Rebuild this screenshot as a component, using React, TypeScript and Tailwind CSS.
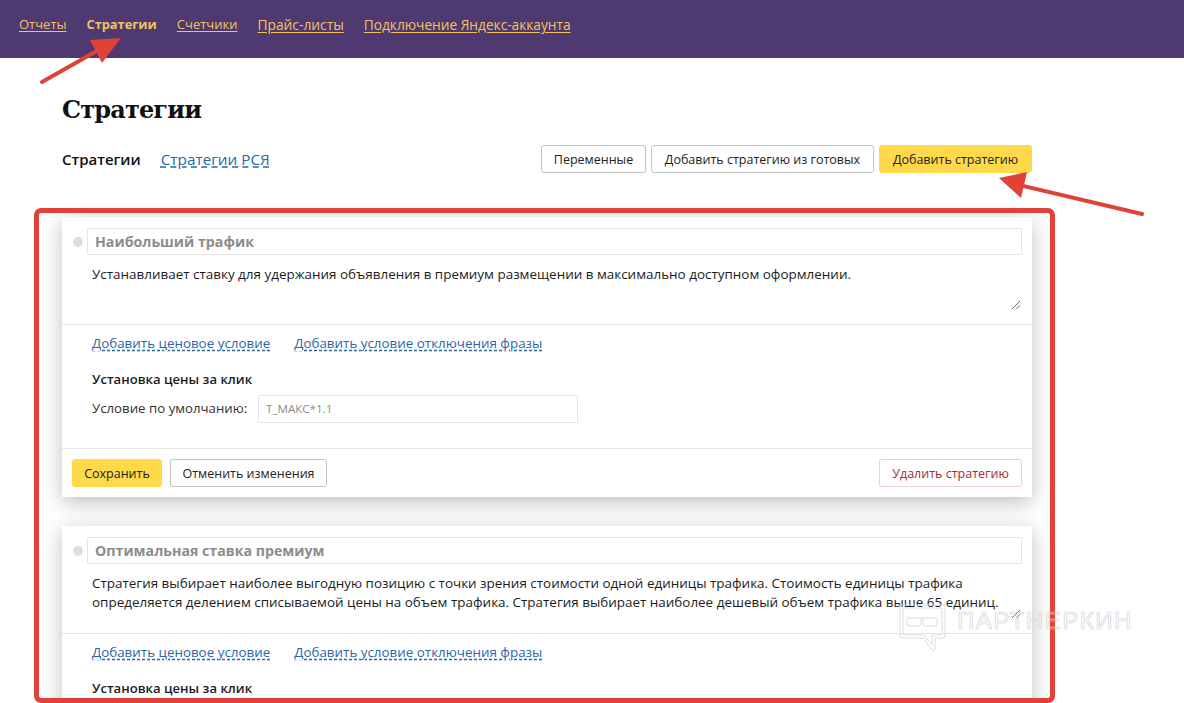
const sans = 'font-["Open_Sans","Noto_Sans",sans-serif]';

const navLinks = [
  { label: 'Отчеты', cls: 'underline text-[13px]' },
  { label: 'Стратегии', cls: 'text-[12.8px] font-bold' },
  { label: 'Счетчики', cls: 'underline text-[13px]' },
  { label: 'Прайс-листы', cls: 'underline text-[13.8px]' },
  { label: 'Подключение Яндекс-аккаунта', cls: 'underline text-[13.7px]' },
];

function Btn({ children, kind = 'plain', className = '' }: { children: string; kind?: 'plain' | 'yellow' | 'danger'; className?: string }) {
  const look =
    kind === 'yellow'
      ? 'bg-[#ffd94a] text-[#222] border-[#ffd94a]'
      : kind === 'danger'
      ? 'bg-white text-[#a32a38] border-[#ebcfd1]'
      : 'bg-white text-[#222] border-[#c4c4c4]';
  return (
    <button className={`h-[28px] pt-[2px] rounded-[3px] border text-[12.5px] leading-none whitespace-nowrap ${look} ${className}`}>
      {children}
    </button>
  );
}

function StrategyCard({ title, text }: { title: string; text: string[] }) {
  return (
    <div className="w-[970px] bg-white shadow-[0_5px_20px_rgba(0,0,0,0.26)]">
      <div className="flex items-center pt-[11px] pl-[11px] pr-[10px]">
        <span className="w-[10px] h-[10px] rounded-full bg-[#dedede] mr-[4px]" />
        <div className="flex-1 h-[27px] flex items-center pl-[7px] border border-[#e4e4e4] rounded-[2px] text-[14.2px] font-bold text-[#8c8c8c]">
          {title}
        </div>
      </div>
      <div className="relative h-[69px] pl-[30px] pt-[10px] text-[13.45px] leading-[19px] text-[#1c1c1c]">
        {text.map((line) => (
          <div key={line} className="whitespace-nowrap">{line}</div>
        ))}
        <svg width="10" height="10" viewBox="0 0 10 10" className="absolute right-[11px] bottom-[14px] text-[#555]">
          <path d="M1 9 L9 1 M5.5 9 L9 5.5" stroke="currentColor" strokeWidth="0.9" fill="none" />
        </svg>
      </div>
      <div className="border-t border-[#e6e6e6] pl-[30px] pt-[9px]">
        <div className="flex gap-[24px] text-[13.4px] leading-[19px] text-[#2a66a8]">
          <a className="underline decoration-dashed underline-offset-2">Добавить ценовое условие</a>
          <a className="underline decoration-dashed underline-offset-2">Добавить условие отключения фразы</a>
        </div>
        <div className="mt-[17px] text-[13.1px] leading-[19px] font-semibold text-[#1c1c1c]">Установка цены за клик</div>
        <div className="flex items-center mt-[6px] text-[13.25px] text-[#333]">
          <span className="w-[166px]">Условие по умолчанию:</span>
          <div className="w-[320px] h-[28px] flex items-center pl-[7px] border border-[#e4e4e4] rounded-[2px] text-[#8c8c8c] text-[11.6px]">
            Т_МАКС*1.1
          </div>
        </div>
      </div>
      <div className="mt-[25px] border-t border-[#e6e6e6] h-[49px] flex items-center px-[10px]">
        <Btn kind="yellow" className="w-[90px]">Сохранить</Btn>
        <Btn className="w-[157px] ml-[8px]">Отменить изменения</Btn>
        <Btn kind="danger" className="w-[143px] ml-auto">Удалить стратегию</Btn>
      </div>
    </div>
  );
}

export default function App() {
  return (
    <div className={`relative h-[703px] overflow-hidden bg-white ${sans}`}>
      <nav className="h-[58px] bg-[#4e3a70] flex gap-[20px] pl-[19px] pt-[15px] leading-[19px] text-[#f4c25c]">
        {navLinks.map((l) => (
          <a key={l.label} className={`underline-offset-2 ${l.cls}`}>{l.label}</a>
        ))}
      </nav>

      <main className="pl-[62px] w-[1032px] box-content">
        <h1 className='mt-[37px] text-[24px] leading-[30px] font-bold text-[#111] font-["DejaVu_Serif",serif] tracking-[-0.85px]'>Стратегии</h1>
        <div className="flex items-center mt-[20px] w-[970px]">
          <span className="text-[15px] font-semibold text-[#111]">Стратегии</span>
          <a className="ml-[20px] text-[15.3px] text-[#2a66a8] underline decoration-dashed underline-offset-2">Стратегии РСЯ</a>
          <div className="ml-auto flex gap-[5px]">
            <Btn className="w-[105px]">Переменные</Btn>
            <Btn className="w-[223px]">Добавить стратегию из готовых</Btn>
            <Btn kind="yellow" className="w-[153px]">Добавить стратегию</Btn>
          </div>
        </div>

        <div className="mt-[44px] flex flex-col gap-[29px]">
          <StrategyCard
            title="Наибольший трафик"
            text={['Устанавливает ставку для удержания объявления в премиум размещении в максимально доступном оформлении.']}
          />
          <StrategyCard
            title="Оптимальная ставка премиум"
            text={[
              'Стратегия выбирает наиболее выгодную позицию с точки зрения стоимости одной единицы трафика. Стоимость единицы трафика',
              'определяется делением списываемой цены на объем трафика. Стратегия выбирает наиболее дешевый объем трафика выше 65 единиц.',
            ]}
          />
        </div>
      </main>

      {/* annotations over the screenshot */}
      <div className="absolute left-[34px] top-[208px] w-[1021px] h-[495px] border-[5px] border-[#e04238] rounded-[7px] pointer-events-none" />
      <svg className="absolute left-0 top-0 pointer-events-none" width="1184" height="703" viewBox="0 0 1184 703">
        <path d="M42 82 L102 48" stroke="#e04238" strokeWidth="4" strokeLinecap="round" />
        <path d="M121 38 L90 40 L102 63 Z" fill="#e04238" />
        <path d="M1142 214 L1015 184" stroke="#e04238" strokeWidth="4" strokeLinecap="round" />
        <path d="M999 178 L1027 172 L1021 198 Z" fill="#e04238" />
      </svg>

      {/* watermark */}
      <div className="absolute left-[899px] top-[603px] flex items-start pointer-events-none">
        <svg width="47" height="50" viewBox="0 0 47 50" fill="none" stroke="#dcdcdc" strokeWidth="1">
          <path d="M1 2 H46 V32 Q46 35 43 35 H36 V46 Q36 49 33 47 L24 35 H4 Q1 35 1 32 Z" />
          <path d="M4 5 H43 V30 Q43 32 41 32 H33 V42 L25 32 H6 Q4 32 4 30 Z" />
          <path d="M8 15 H38 M8 15 V20 Q8 23 11 23 H19 Q22 23 22 20 V15 M24 15 V20 Q24 23 27 23 H35 Q38 23 38 20 V15" />
        </svg>
        <span className='ml-[11px] mt-[5px] font-["Liberation_Sans",sans-serif] text-[24px] leading-[26px] text-transparent tracking-[1.5px] [-webkit-text-stroke:0.7px_#d4d4d4]'>ПАРТНЕРКИН</span>
      </div>
    </div>
  );
}
